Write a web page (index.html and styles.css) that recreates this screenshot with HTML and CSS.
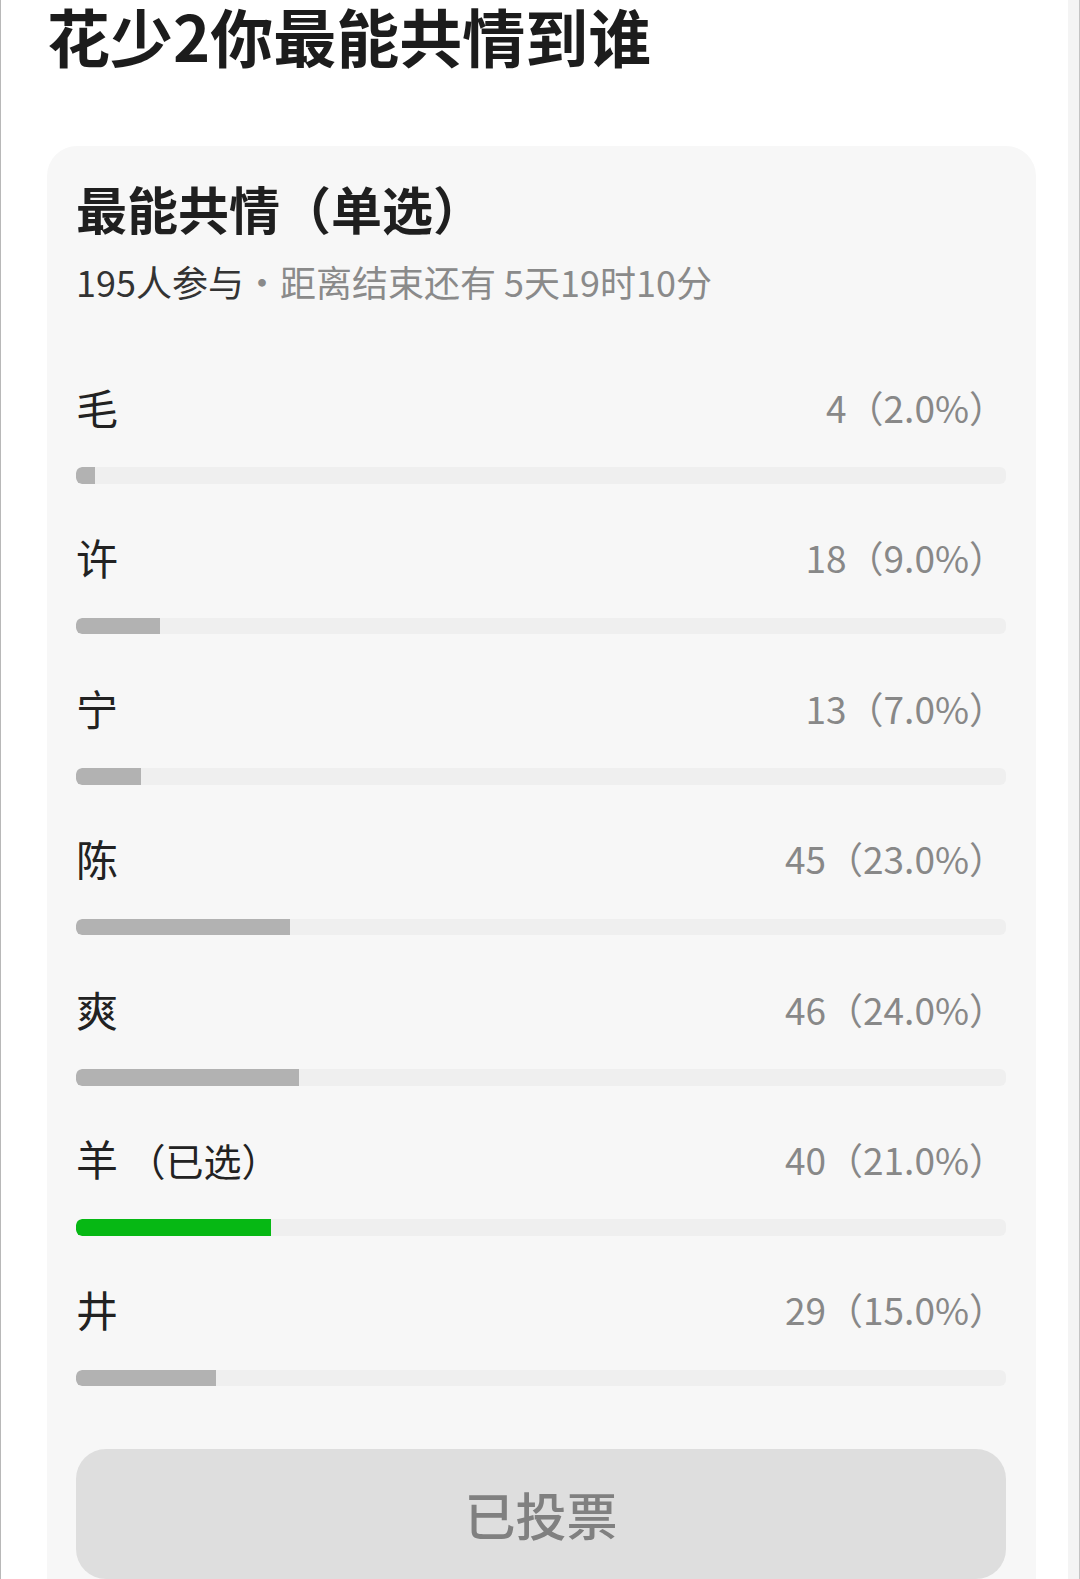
FILE: index.html
```html
<!DOCTYPE html>
<html lang="zh-CN">
<head>
<meta charset="utf-8">
<title>花少2你最能共情到谁</title>
<link rel="stylesheet" href="styles.css">
</head>
<body>
<div class="page">
  <main class="main">
    <h1 class="title">花少2你最能共情到谁</h1>
    <section class="card">
      <h2 class="card-title">最能共情（单选）</h2>
      <p class="meta"><span class="meta-strong">195人参与</span><span class="dot">·</span>距离结束还有 5天19时10分</p>
      <ul class="options">
        <li class="option">
          <div class="option-row"><span class="option-label">毛</span><span class="option-count">4（2.0%）</span></div>
          <div class="bar"><div class="bar-fill" style="width:2%"></div></div>
        </li>
        <li class="option">
          <div class="option-row"><span class="option-label">许</span><span class="option-count">18（9.0%）</span></div>
          <div class="bar"><div class="bar-fill" style="width:9%"></div></div>
        </li>
        <li class="option">
          <div class="option-row"><span class="option-label">宁</span><span class="option-count">13（7.0%）</span></div>
          <div class="bar"><div class="bar-fill" style="width:7%"></div></div>
        </li>
        <li class="option">
          <div class="option-row"><span class="option-label">陈</span><span class="option-count">45（23.0%）</span></div>
          <div class="bar"><div class="bar-fill" style="width:23%"></div></div>
        </li>
        <li class="option">
          <div class="option-row"><span class="option-label">爽</span><span class="option-count">46（24.0%）</span></div>
          <div class="bar"><div class="bar-fill" style="width:24%"></div></div>
        </li>
        <li class="option option-selected">
          <div class="option-row"><span class="option-label">羊 <span class="selected-tag">（已选）</span></span><span class="option-count">40（21.0%）</span></div>
          <div class="bar"><div class="bar-fill" style="width:21%"></div></div>
        </li>
        <li class="option">
          <div class="option-row"><span class="option-label">井</span><span class="option-count">29（15.0%）</span></div>
          <div class="bar"><div class="bar-fill" style="width:15%"></div></div>
        </li>
      </ul>
      <button class="vote-btn" type="button">已投票</button>
    </section>
  </main>
  <div class="scroll-strip"></div>
</div>
</body>
</html>
```
FILE: styles.css
```css
* { box-sizing: border-box; }
html, body { margin: 0; padding: 0; background: #ffffff; }
body {
  font-family: "Noto Sans CJK SC", "Noto Sans", sans-serif;
  width: 1080px;
  height: 1579px;
  overflow: hidden;
}
.page {
  display: flex;
  height: 1579px;
}
.main {
  flex: 1;
  border-left: 1px solid #b8b8b8;
  padding-right: 32px;
}
.scroll-strip {
  width: 12px;
  background: #f4f4f4;
  border-right: 1px solid #c4c4c4;
}
.title {
  margin: 0;
  padding: 0 0 0 46px;
  height: 146px;
  font-size: 63px;
  line-height: 70px;
  font-weight: 700;
  color: #1c1c1c;
}
.card {
  margin-left: 46px;
  background: #f7f7f7;
  border-radius: 30px 30px 0 0;
  padding: 32px 30px 0 29px;
  height: 1433px;
}
.card-title {
  margin: 0;
  font-size: 51px;
  line-height: 60px;
  font-weight: 700;
  color: #1f1f1f;
}
.meta {
  margin: 21.4px 0 0;
  font-size: 36px;
  line-height: 44px;
  color: #8a8a8a;
}
.meta-strong { color: #333333; }
.dot { margin: 0; }
.options {
  list-style: none;
  margin: 78.6px 0 0;
  padding: 0;
  display: flex;
  flex-direction: column;
  gap: 48.4px;
}
.option { display: flex; flex-direction: column; gap: 35.5px; }
.option-row {
  display: flex;
  justify-content: space-between;
  align-items: center;
  height: 50px;
}
.option-label {
  font-size: 42px;
  line-height: 50px;
  color: #222222;
}
.selected-tag { font-size: 38px; }
.option-count {
  font-size: 37px;
  line-height: 50px;
  color: #888888;
}
.bar {
  height: 16.5px;
  background: #efefef;
  border-radius: 6px;
  overflow: hidden;
}
.bar-fill {
  height: 100%;
  background: #b2b2b2;
  border-radius: 6px 0 0 6px;
}
.option-selected .bar-fill { background: #06b814; }
.vote-btn {
  display: block;
  width: 100%;
  margin-top: 62.5px;
  height: 130px;
  border: none;
  border-radius: 30px;
  background: #dedede;
  color: #808080;
  font-family: "Noto Sans CJK SC", "Noto Sans", sans-serif;
  font-size: 51px;
  font-weight: 500;
  padding: 0;
}
```
